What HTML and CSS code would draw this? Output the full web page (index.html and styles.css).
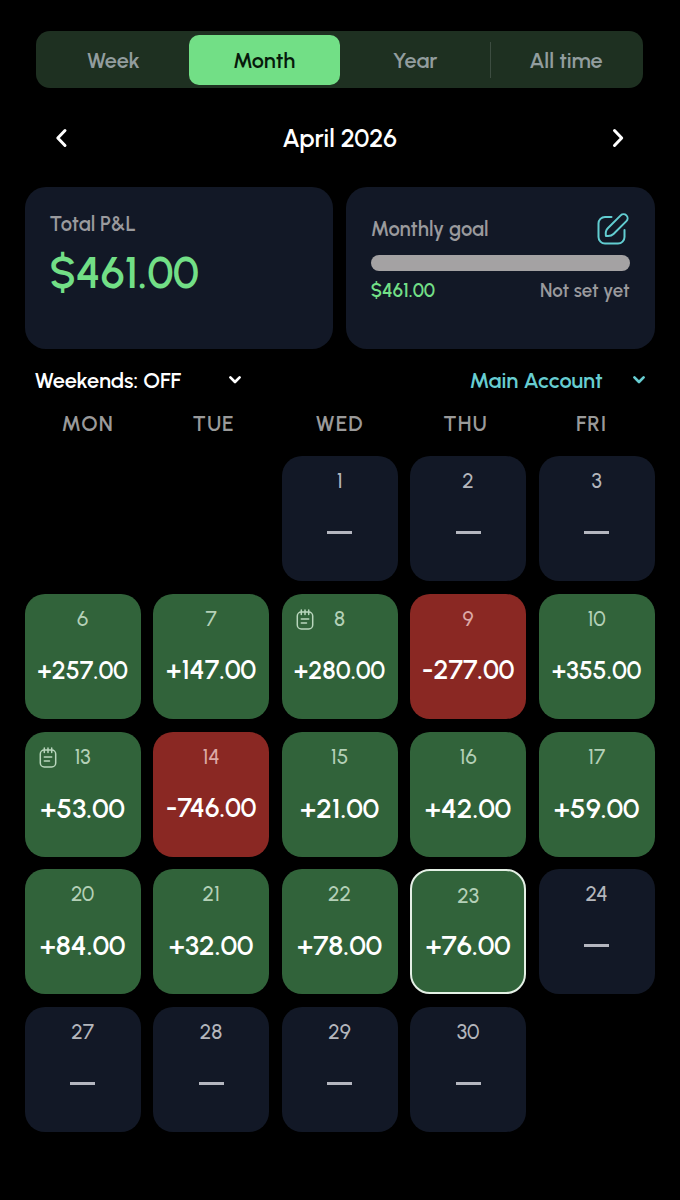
FILE: index.html
```html
<!DOCTYPE html>
<html lang="en">
<head>
    <meta charset="UTF-8">
    <meta name="viewport" content="width=device-width, initial-scale=1.0">
    <title>P&amp;L Calendar</title>
    <link rel="stylesheet" href="styles.css">
</head>
<body>
    <svg width="0" height="0" class="sprite">
        <symbol id="note" viewBox="0 0 18 21">
            <rect x="1.3" y="3" width="15.4" height="17" rx="4"/>
            <path d="M5.3 1v4.4M9 1v4.4M12.7 1v4.4M5.3 10h7.4M5.3 14h5.2"/>
        </symbol>
        <symbol id="down" viewBox="0 0 14 10">
            <path d="M2.4 2.4L7 7l4.6-4.6"/>
        </symbol>
    </svg>
    <div class="container">
        <div class="tabs">
            <div class="tab">Week</div>
            <div class="tab active">Month</div>
            <div class="tab">Year</div>
            <div class="tab divided">All time</div>
        </div>

        <div class="month-nav">
            <svg class="arrow" viewBox="0 0 14 22"><path d="M10 3.5L2.8 11l7.200 7.500"/></svg>
            <div class="month-title">April 2026</div>
            <svg class="arrow" viewBox="0 0 14 22"><path d="M3.500 3.500l7.200 7.500-7.200 7.500"/></svg>
        </div>

        <div class="cards">
            <div class="card">
                <div class="label">Total P&amp;L</div>
                <div class="total">$461.00</div>
            </div>
            <div class="card goal">
                <div class="goal-head">
                    <div class="label">Monthly goal</div>
                    <svg class="edit" viewBox="0 0 34 34">
                        <path d="M15.5 5H9a6.500 6.500 0 0 0-6.500 6.500V25A6.500 6.500 0 0 0 9 31.500h13a6.500 6.500 0 0 0 6.500-6.500v-7"/>
                        <path d="M24.700 3.400L11.800 16.300c-1.800 1.800-2.500 4.200-1.900 7.600 3.400.6 5.800-.1 7.600-1.900L30.400 9.100a3.900 3.900 0 0 0-5.700-5.700z"/>
                    </svg>
                </div>
                <div class="bar"></div>
                <div class="goal-foot">
                    <span class="goal-value">$461.00</span>
                    <span class="goal-status">Not set yet</span>
                </div>
            </div>
        </div>

        <div class="filters">
            <div class="filter weekends"><span>Weekends: OFF</span><svg class="down"><use href="#down"/></svg></div>
            <div class="filter account"><span>Main Account</span><svg class="down"><use href="#down"/></svg></div>
        </div>

        <div class="weekdays">
            <div>MON</div>
            <div>TUE</div>
            <div>WED</div>
            <div>THU</div>
            <div>FRI</div>
        </div>

        <div class="calendar">
            <div class="day first"><span class="num">1</span><span class="dash"></span></div>
            <div class="day"><span class="num">2</span><span class="dash"></span></div>
            <div class="day"><span class="num">3</span><span class="dash"></span></div>

            <div class="day win"><span class="num">6</span><span class="amount long">+257.00</span></div>
            <div class="day win"><span class="num">7</span><span class="amount medium">+147.00</span></div>
            <div class="day win"><svg class="note"><use href="#note"/></svg><span class="num">8</span><span class="amount long">+280.00</span></div>
            <div class="day loss"><span class="num">9</span><span class="amount medium">-277.00</span></div>
            <div class="day win"><span class="num">10</span><span class="amount long">+355.00</span></div>

            <div class="day win"><svg class="note"><use href="#note"/></svg><span class="num">13</span><span class="amount">+53.00</span></div>
            <div class="day loss"><span class="num">14</span><span class="amount medium">-746.00</span></div>
            <div class="day win"><span class="num">15</span><span class="amount">+21.00</span></div>
            <div class="day win"><span class="num">16</span><span class="amount">+42.00</span></div>
            <div class="day win"><span class="num">17</span><span class="amount">+59.00</span></div>

            <div class="day win"><span class="num">20</span><span class="amount">+84.00</span></div>
            <div class="day win"><span class="num">21</span><span class="amount">+32.00</span></div>
            <div class="day win"><span class="num">22</span><span class="amount">+78.00</span></div>
            <div class="day win today"><span class="num">23</span><span class="amount">+76.00</span></div>
            <div class="day"><span class="num">24</span><span class="dash"></span></div>

            <div class="day"><span class="num">27</span><span class="dash"></span></div>
            <div class="day"><span class="num">28</span><span class="dash"></span></div>
            <div class="day"><span class="num">29</span><span class="dash"></span></div>
            <div class="day"><span class="num">30</span><span class="dash"></span></div>
        </div>
    </div>
</body>
</html>
```
FILE: styles.css
```css
* { margin: 0; padding: 0; box-sizing: border-box; }
body {
    font-family: 'Urbanist', 'Lato', sans-serif;
    font-weight: 600;
    min-height: 100vh;
    background: #000;
    color: white;
    white-space: nowrap;
}
svg {
    fill: none;
    stroke: currentColor;
    stroke-linecap: round;
    stroke-linejoin: round;
    flex-shrink: 0;
}
.sprite { position: absolute; }
.container {
    width: 680px;
    padding: 31.4px 25.4px 0 24.6px;
}
.tabs {
    display: grid;
    grid-template-columns: repeat(4, 1fr);
    height: 57px;
    margin: 0 11.6px;
    padding: 3.4px 1.6px;
    border-radius: 14px;
    background: #1e3021;
}
.tab {
    display: flex;
    align-items: center;
    justify-content: center;
    position: relative;
    border-radius: 10px;
    font-size: 21.7px;
    color: #929d9e;
}
.tab.active {
    background: #72df86;
    color: #071a0b;
}
.tab.divided::before {
    content: '';
    position: absolute;
    left: -1px;
    top: 7px;
    width: 1px;
    height: 36px;
    background: #3d4d41;
}
.month-nav {
    display: flex;
    align-items: center;
    justify-content: space-between;
    height: 40px;
    margin: 29.6px 30px 0;
}
.arrow {
    width: 14px;
    height: 22px;
    stroke-width: 3;
}
.month-title {
    font-size: 25px;
}
.cards {
    display: grid;
    grid-template-columns: 1fr 1fr;
    gap: 12.5px;
    height: 162px;
    margin-top: 29.5px;
}
.card {
    padding: 25px 25px 0;
    border-radius: 21px;
    background: #121826;
}
.label {
    font-size: 20.2px;
    line-height: 24px;
    color: #9a9a9d;
}
.total {
    margin-top: 8px;
    font-size: 43.8px;
    line-height: 57px;
    color: #72df86;
}
.goal-head {
    display: flex;
    align-items: center;
    justify-content: space-between;
    height: 34px;
}
.edit {
    width: 34px;
    height: 34px;
    stroke-width: 2;
    color: #62cdd1;
}
.bar {
    height: 16px;
    margin-top: 8.5px;
    border-radius: 8px;
    background: #a4a2a3;
}
.goal-foot {
    display: flex;
    justify-content: space-between;
    margin-top: 8px;
    font-size: 18.8px;
    line-height: 24px;
}
.goal-value { color: #72df86; }
.goal-status { color: #9a9a9d; }
.filters {
    display: flex;
    justify-content: space-between;
    margin-top: 17.5px;
    padding: 0 9px 0 10px;
    font-size: 21.8px;
    line-height: 26px;
}
.filter {
    display: flex;
    align-items: center;
    justify-content: space-between;
}
.weekends { width: 207px; }
.account {
    width: 176px;
    color: #67cdd1;
}
.down {
    width: 14px;
    height: 10px;
    stroke-width: 2.7;
}
.weekdays {
    display: grid;
    grid-template-columns: repeat(5, 1fr);
    margin-top: 18px;
    font-size: 21.3px;
    line-height: 26px;
    letter-spacing: 1px;
    text-align: center;
    color: #9a9a9a;
}
.calendar {
    display: grid;
    grid-template-columns: repeat(5, 1fr);
    grid-auto-rows: 125px;
    gap: 12.7px 12.5px;
    margin-top: 19.4px;
}
.day {
    display: flex;
    flex-direction: column;
    align-items: center;
    position: relative;
    padding-top: 12px;
    border-radius: 20px;
    background: #121826;
}
.day.first { grid-column-start: 3; }
.win { background: #31633a; }
.loss { background: #8a2823; }
.today {
    border: 2px solid #e4f0e5;
}
.num {
    font-size: 20.8px;
    line-height: 26px;
    font-weight: 500;
    color: #b4b6bc;
}
.win .num { color: #b4d0b7; }
.loss .num { color: #dda9a6; }
.amount {
    margin-top: 22px;
    font-size: 27.9px;
    line-height: 32px;
}
.amount.long { font-size: 24.9px; }
.amount.medium { font-size: 26.6px; }
.today .amount { margin-top: 20px; }
.dash {
    width: 25px;
    height: 3px;
    margin-top: 37px;
    background: #b4b6bf;
}
.note {
    position: absolute;
    left: 14px;
    top: 15px;
    width: 18px;
    height: 21px;
    stroke-width: 1.5;
    color: #b9d6bd;
}
```
